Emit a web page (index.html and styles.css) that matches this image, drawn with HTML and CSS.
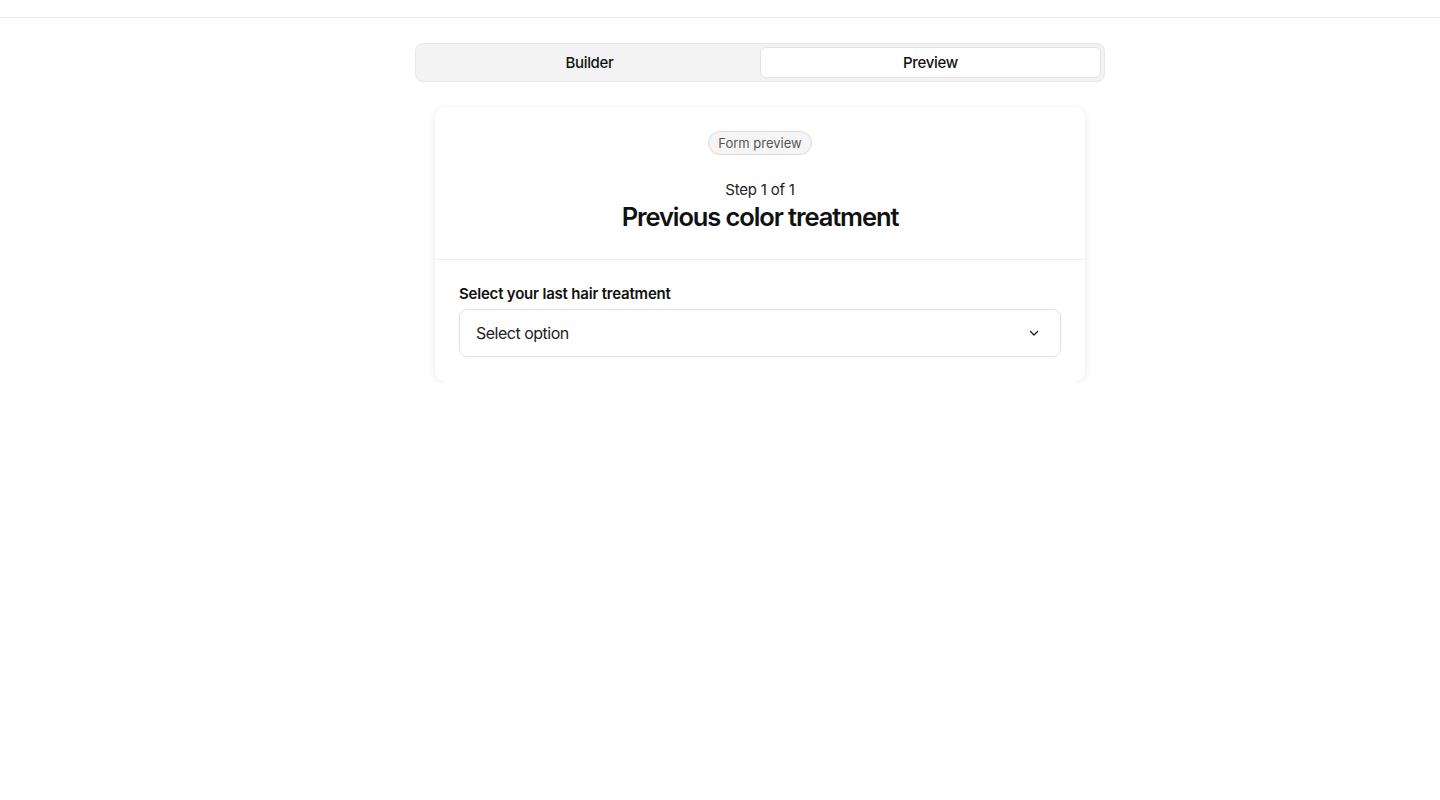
FILE: index.html
```html
<!DOCTYPE html>
<html lang="en">
<head>
<meta charset="utf-8">
<title>Form preview</title>
<link rel="stylesheet" href="styles.css">
</head>
<body>
<header class="topbar"></header>
<main class="main">
  <div class="tabs">
    <button class="tab">Builder</button>
    <button class="tab tab-active">Preview</button>
  </div>
  <section class="card">
    <div class="card-head">
      <span class="badge">Form preview</span>
      <div class="step">Step 1 of 1</div>
      <h1 class="title">Previous color treatment</h1>
    </div>
    <div class="card-body">
      <label class="label">Select your last hair treatment</label>
      <div class="select">
        <span class="select-text">Select option</span>
        <svg class="chev" width="12" height="12" viewBox="0 0 12 12" fill="none"><path d="M2.5 4.5 6 8l3.5-3.5" stroke="#222" stroke-width="1.4" stroke-linecap="round" stroke-linejoin="round"/></svg>
      </div>
    </div>
  </section>
</main>
</body>
</html>
```
FILE: styles.css
```css
* { box-sizing: border-box; }
html, body { margin: 0; padding: 0; background: #fff; }
body { font-family: Inter, "Liberation Sans", sans-serif; color: #111; }
.topbar { height: 18px; border-bottom: 1px solid #e9e9e9; }
.main { margin-left: 80px; display: flex; flex-direction: column; align-items: center; padding-top: 25px; }
.tabs { width: 690px; height: 39px; background: #f3f3f3; border: 1px solid #e8e8e8; border-radius: 8px; padding: 3px; display: flex; }
.tab { flex: 1; border: 1px solid transparent; background: transparent; border-radius: 6px; font-family: Inter, "Liberation Sans", sans-serif; font-size: 15px; font-weight: 500; letter-spacing: -0.3px; color: #111; cursor: pointer; padding: 0; }
.tab-active { background: #fff; border-color: #e2e2e2; }
.card { width: 650px; margin-top: 25px; background: #fff; border-radius: 10px; box-shadow: 0 2px 10px rgba(0,0,0,0.08), 0 0 1px rgba(0,0,0,0.06); }
.card-head { display: flex; flex-direction: column; align-items: center; padding: 24px 24px 24px; border-bottom: 1px solid #efefef; }
.badge { height: 24px; padding: 0 9px; border: 1px solid #dcdcdc; background: #f5f5f5; border-radius: 12px; font-size: 13px; color: #555; line-height: 23px; }
.step { margin-top: 23px; font-size: 15px; line-height: 24px; color: #222; letter-spacing: -0.2px; }
.title { margin: -2px 0 2px; font-size: 25.5px; line-height: 33px; font-weight: 600; letter-spacing: -1.1px; color: #111; }
.card-body { padding: 24px 24px 25px; }
.label { display: block; font-size: 15px; line-height: 20px; font-weight: 600; color: #111; letter-spacing: -0.2px; margin-bottom: 5px; }
.select { height: 48px; border: 1px solid #e2e2e2; border-radius: 8px; display: flex; align-items: center; justify-content: space-between; padding: 0 20px 0 16px; }
.select-text { font-size: 16px; color: #222; letter-spacing: -0.5px; }
.chev { display: block; }
```
